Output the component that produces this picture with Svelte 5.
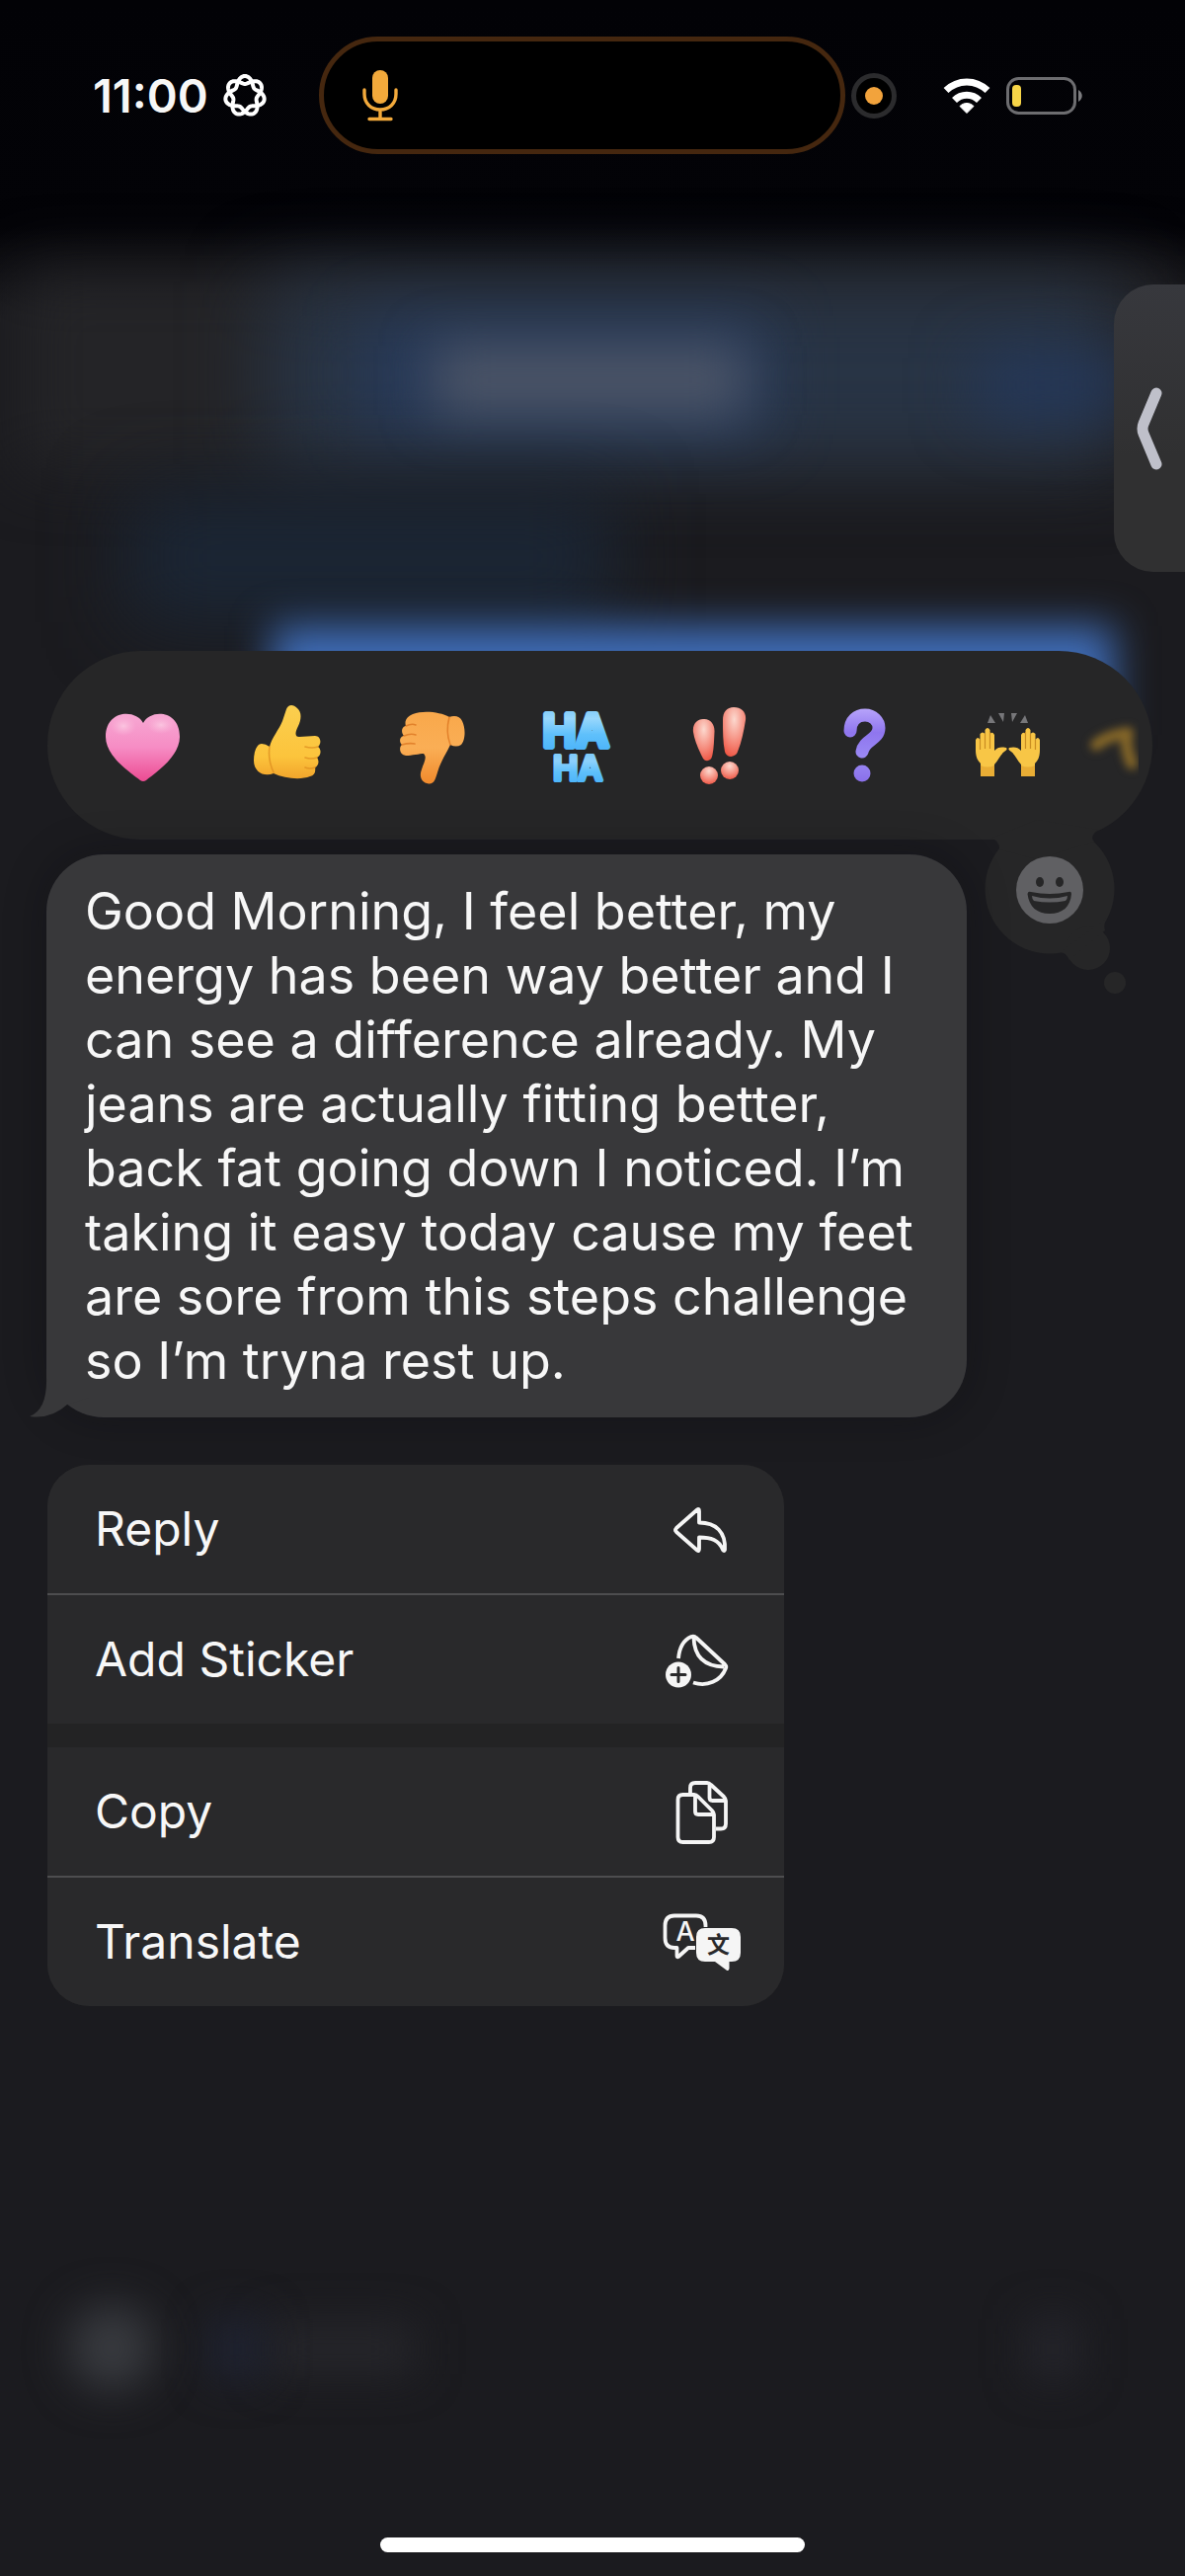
<script>
  const reactions = [
    { id: 'heart', label: 'Heart' },
    { id: 'up', label: 'Thumbs up' },
    { id: 'down', label: 'Thumbs down' },
    { id: 'haha', label: 'Ha ha' },
    { id: 'bang', label: 'Exclamation' },
    { id: 'question', label: 'Question' },
    { id: 'hands', label: 'Raised hands' },
    { id: 'more', label: 'More reactions' },
  ];

  const groups = [
    [
      { id: 'reply', label: 'Reply' },
      { id: 'sticker', label: 'Add Sticker' },
    ],
    [
      { id: 'copy', label: 'Copy' },
      { id: 'translate', label: 'Translate' },
    ],
  ];

  // Seven-petalled ring: one wavy strand that goes round twice and crosses itself.
  const ring = Array.from({ length: 281 }, (_, i) => {
    const t = (i / 280) * Math.PI * 4;
    const r = 16 + 4 * Math.cos(3.5 * t);
    return `${(22 + r * Math.sin(t)).toFixed(2)},${(22 - r * Math.cos(t)).toFixed(2)}`;
  }).join(' ');
</script>

<main class="screen">
  <div class="backdrop" aria-hidden="true">
    <div class="glow band"></div>
    <div class="glow header"></div>
    <div class="glow accent"></div>
    <div class="glow title"></div>
    <div class="glow action"></div>
    <div class="glow subtitle"></div>
    <div class="glow sent"></div>
    <div class="glow plus"></div>
    <div class="glow field"></div>
    <div class="glow cursor"></div>
    <div class="glow mic-hint"></div>
  </div>

  <header class="status">
    <div class="left">
      <time>11:00</time>
      <svg width="44" height="44" viewBox="0 0 44 44" aria-hidden="true">
        <polygon points={ring} fill="none" stroke="#fff" stroke-width="4" stroke-linejoin="round" />
      </svg>
    </div>
    <div class="island">
      <svg width="36" height="52" viewBox="0 0 36 52" aria-hidden="true">
        <rect x="10" y="0" width="16" height="34" rx="8" fill="#f2a93b" />
        <path d="M2 20v4c0 10 7 16 16 16s16-6 16-16v-4M18 40v9M7 49.500h22" fill="none" stroke="#f2a93b" stroke-width="3.400" stroke-linecap="round" />
      </svg>
    </div>
    <div class="right">
      <span class="privacy"><i></i></span>
      <svg width="48" height="36" viewBox="0 0 48 36" aria-hidden="true">
        <path d="M24 35.500l-7-7c4-4 10-4 14 0z" fill="#fff" stroke="#fff" stroke-width="1" stroke-linejoin="round" />
        <path d="M11.500 22.500c7-7 18-7 25 0" fill="none" stroke="#fff" stroke-width="7" />
        <path d="M3 12.500c12-11.500 30-11.500 42 0" fill="none" stroke="#fff" stroke-width="7" />
      </svg>
      <svg width="78" height="38" viewBox="0 0 78 38" aria-hidden="true">
        <rect x="1.500" y="1.500" width="68" height="35" rx="11" fill="none" stroke="#6d6d70" stroke-width="3" />
        <rect x="6" y="8" width="9" height="22" rx="4" fill="#f7d548" />
        <path d="M73 13c5 3 5 9 0 12z" fill="#7b7b7e" />
      </svg>
    </div>
  </header>

  <button class="edge" aria-label="Open side panel">
    <svg width="30" height="84" viewBox="0 0 30 84" aria-hidden="true">
      <path d="M23 6L10 37q-2 5 0 10L23 78" fill="none" stroke="#bfc0ca" stroke-width="11" stroke-linecap="round" stroke-linejoin="round" />
    </svg>
  </button>

  <section class="reactions" aria-label="Reactions">
    <ul>
      {#each reactions as r (r.id)}
        <li>
          <button class="reaction" aria-label={r.label}>
            <svg class={r.id} width="96" height="96" viewBox="0 0 96 96" aria-hidden="true">
              {#if r.id === 'heart'}
                <defs>
                  <linearGradient id="g-heart" x1="0" y1="0" x2="0" y2="1">
                    <stop offset="0" stop-color="#f7a8d3" /><stop offset=".5" stop-color="#f68cc4" /><stop offset="1" stop-color="#ec4b92" />
                  </linearGradient>
                  <radialGradient id="g-shine"><stop offset="0" stop-color="#fbc4e0" /><stop offset="1" stop-color="#f9b5d8" stop-opacity="0" /></radialGradient>
                </defs>
                <path d="M48 25C41 11 10 11 10 39C10 60 38 77 45 83Q48 85 51 83C58 77 85 60 85 39C85 11 55 11 48 25Z" fill="url(#g-heart)" />
                <ellipse cx="28" cy="28" rx="13" ry="10" fill="url(#g-shine)" />
                <ellipse cx="66" cy="27" rx="14" ry="9" fill="url(#g-shine)" />
              {:else if r.id === 'up'}
                <defs>
                  <linearGradient id="g-up" x1="0" y1="0" x2="0" y2="1">
                    <stop offset="0" stop-color="#fbcf4f" /><stop offset=".7" stop-color="#fcc43c" /><stop offset="1" stop-color="#f2a52c" />
                  </linearGradient>
                </defs>
                <path d="M47 11C49 6 54 6 58 10C63 14 62 22 59 28C56 34 55 39 60 39L76 38C82 38 83 46 79 49C83 52 82 58 78 60C81 64 79 69 76 70C77 75 75 78 71 79C61 83 45 81 34 76C25 80 14 75 14 63C14 54 17 46 22 46Q26 46 30 49C32 40 40 31 43 23Z" fill="url(#g-up)" />
                <path d="M66 49Q73 51 79 49M66 60Q72 62 78 60M66 70Q71 72 76 70M30 49Q28 62 34 75" fill="none" stroke="#dc8a1e" stroke-width="1.600" stroke-linecap="round" opacity=".7" />
              {:else if r.id === 'down'}
                <defs>
                  <linearGradient id="g-down" x1="0" y1="0" x2="0" y2="1">
                    <stop offset="0" stop-color="#f9a84b" /><stop offset=".5" stop-color="#faae55" /><stop offset="1" stop-color="#f08a2c" />
                  </linearGradient>
                </defs>
                <path d="M66 19C71 17 77 18 79 23C83 31 82 43 78 47Q73 50 67 47C63 56 57 64 54 75C52 81 51 87 45 86.500C38 86 35 79 38 72C40 65 44 60 40 56C36 56 28 58 22 58C15 57 15 49 18 47C14 43 17 38 20 38C16 33 19 28 22 28C20 22 24 18 29 16C40 12 57 14 66 19Z" fill="url(#g-down)" />
                <path d="M18 47Q25 45 31 46M20 38Q27 35 32 37M22 28Q28 25 32 27M66 19Q62 34 67 47" fill="none" stroke="#d9701c" stroke-width="1.600" stroke-linecap="round" opacity=".7" />
              {:else if r.id === 'haha'}
                <defs>
                  <linearGradient id="g-haha" gradientUnits="userSpaceOnUse" x1="0" y1="10" x2="0" y2="86">
                    <stop offset="0" stop-color="#7fcbfa" /><stop offset=".14" stop-color="#98d7fc" /><stop offset=".35" stop-color="#5fc0fb" /><stop offset=".57" stop-color="#4cb4fa" />
                    <stop offset=".6" stop-color="#7ccafa" /><stop offset=".7" stop-color="#8ed1fc" /><stop offset=".85" stop-color="#5ec0fb" /><stop offset="1" stop-color="#4cb4fa" />
                  </linearGradient>
                </defs>
                <text class="ha" x="48" y="49" font-size="45" text-anchor="middle">HA</text>
                <text class="ha small" x="50" y="83" font-size="34" text-anchor="middle">HA</text>
              {:else if r.id === 'bang'}
                <defs>
                  <radialGradient id="g-bang" cx=".5" cy=".25" r=".8">
                    <stop offset="0" stop-color="#fcd9cf" /><stop offset=".6" stop-color="#f5897a" /><stop offset="1" stop-color="#ee5240" />
                  </radialGradient>
                </defs>
                <g fill="url(#g-bang)">
                  <path d="M31 21C38 20 43 26 42.500 34C42 43 42 52 40 59C39 64 32 65 30 59C25 49 22 41 21 34C20 26 25 21 31 21Z" />
                  <path d="M62 9C70 9 75 14 74 22C72 34 70 44 66 54C64 60 55 61 53 54C51 44 51 34 51 22C51 14 55 9 62 9Z" />
                  <circle cx="37" cy="78" r="9" />
                  <circle cx="58" cy="73" r="9" />
                </g>
              {:else if r.id === 'question'}
                <defs>
                  <linearGradient id="g-q" gradientUnits="userSpaceOnUse" x1="0" y1="8" x2="0" y2="84">
                    <stop offset="0" stop-color="#bba8fb" /><stop offset=".35" stop-color="#8f76ee" /><stop offset=".7" stop-color="#9b8af5" /><stop offset="1" stop-color="#8a70ea" />
                  </linearGradient>
                </defs>
                <path d="M34 33C34 22 41 17 49 17C57 17 63 23 63 30C63 42 48 42 46 54" fill="none" stroke="url(#g-q)" stroke-width="13" stroke-linecap="round" />
                <circle cx="46" cy="76" r="8.500" fill="url(#g-q)" />
              {:else if r.id === 'hands'}
                <defs>
                  <g id="hand">
                    <path d="M20 79V66C16 62 15 58 15 52V42Q17 38 19.500 42V36Q22 33 24.500 36V32Q27 28 29.500 32V36Q32 33 34 37V53C37 49 42 49 46 50Q48 52 44 54C40 57 38 63 34 67V79Z" fill="#f8c646" />
                    <path d="M19.500 42V52M24.500 36V51M29.500 34V51" stroke="#c98d22" stroke-width="1.200" />
                    <path d="M20 68Q27 71 34 68V79H20Z" fill="#e9ad35" />
                  </g>
                </defs>
                <use href="#hand" />
                <use href="#hand" transform="translate(95 0) scale(-1 1)" />
                <path d="M30 17l5 8h-8zM38 15h6l-1 9zM51 15h6l-5 9zM65 17l3 8h-8z" fill="#77777a" />
              {:else}
                <path d="M-9 47Q4 37 23 35Q19 46 27 66" fill="none" stroke="#846628" stroke-width="12" stroke-linecap="round" stroke-linejoin="round" />
              {/if}
            </svg>
          </button>
        </li>
      {/each}
    </ul>
    <button class="emoji" aria-label="Choose an emoji">
      <svg width="160" height="180" viewBox="0 0 160 180" aria-hidden="true">
        <g fill="#262627">
          <circle cx="73" cy="70" r="65.500" />
          <circle cx="112" cy="130" r="22" />
          <circle cx="139" cy="165" r="11" />
          <path d="M13 19Q22 20 22 30L60 40L118 22Q113 17 122 10L60 0z" />
          <path d="M84 134Q90 135 93 142L129 112Q127 106 131 99z" />
        </g>
        <circle cx="73" cy="71" r="34" fill="#606063" />
        <ellipse cx="63" cy="63" rx="4" ry="5" fill="#262627" />
        <ellipse cx="83" cy="63" rx="4" ry="5" fill="#262627" />
        <path d="M50.500 75Q51 72 54 73Q73 77 92 73Q95 72 95 75C94 88 86 95 73 95S52 88 50.500 75Z" fill="#262627" />
        <path d="M55 77Q73 82 91 77Q91 80 89 82Q73 85 57 82Q55 80 55 77Z" fill="#606063" />
      </svg>
    </button>
  </section>

  <article class="bubble">
    <p>Good Morning, I feel better, my energy has been way better and I can see a difference already. My jeans are actually fitting better, back fat going down I noticed. I’m taking it easy today cause my feet are sore from this steps challenge so I’m tryna rest up.</p>
    <svg class="tail" width="60" height="70" viewBox="0 0 60 70" aria-hidden="true">
      <path d="M17 0V30Q18 62 0 69Q22 72 38 57L60 50V0Z" fill="#38383a" />
    </svg>
  </article>

  <nav class="menu" aria-label="Message actions">
    {#each groups as group}
      <div class="group">
        {#each group as item (item.id)}
          <button class="item">
            <span>{item.label}</span>
            <svg width="80" height="70" viewBox="0 0 80 70" aria-hidden="true" fill="none" stroke="#f5f5f5" stroke-width="3.800" stroke-linecap="round" stroke-linejoin="round">
              {#if item.id === 'reply'}
                <path d="M35 15.500Q37 14 37 17V28.500C54 28.500 64 38 63 56Q62.500 58 61 56C57 46 49 43.500 37 43.500V55Q37 58 35 56.500L14 38Q12 36 14 34Z" />
              {:else if item.id === 'sticker'}
                <path d="M16 34C17 23 22 15 29 12Q32 11 34 13L63 40Q65 42 64 44C59 57 45 63 31 58.500M31.500 13C32 32 42 42 62 42.500" stroke-linecap="butt" />
                <circle cx="16" cy="50.500" r="13" fill="#f5f5f5" stroke="none" />
                <path d="M16 43.500v14M9 50.500h14" stroke="#29292b" stroke-width="3" />
              {:else if item.id === 'copy'}
                <path d="M20.500 18H32Q34 18 36 20L50 34Q52 36 52 38V61Q52 66 47 66H20.500Q15.500 66 15.500 61V23Q15.500 18 20.500 18ZM33 19V35Q33 38 36 38H51" />
                <path d="M28 17V11Q28 6 33 6H45Q47 6 49 8L62 20Q64 22 64 24V47.500Q64 52.500 59 52.500H54M47.500 7V21Q47.500 24 50.500 24H63" stroke-linecap="butt" />
              {:else}
                <path d="M33 41H26L16 50Q14.500 51 14.500 49V41H12Q2.500 41 2.500 31V18.500Q2.500 8.500 12 8.500H34Q43.500 8.500 43.500 18.500V20" stroke-linecap="butt" />
                <path d="M43 21H70Q79 21 79 30V46Q79 55 70 55H67.500V62Q67 65 64.500 63.500L53 55H43Q34 55 34 46V30Q34 21 43 21Z" fill="#f5f5f5" stroke="none" />
                <text class="latin" x="23" y="34" font-size="27" text-anchor="middle">A</text>
                <text class="han" x="56.500" y="46" font-size="23" text-anchor="middle">文</text>
              {/if}
            </svg>
          </button>
        {/each}
      </div>
    {/each}
  </nav>

  <div class="home"></div>
</main>

<style>
  :global(body) {
    margin: 0;
    background: #1b1b1f;
  }
  .screen {
    position: relative;
    display: flex;
    flex-direction: column;
    min-height: 100vh;
    box-sizing: border-box;
    padding: 37px 0 24px;
    overflow: hidden;
    color: #f7f7f7;
    font-family: Inter, 'Liberation Sans', sans-serif;
    background: linear-gradient(180deg, #020206 0, #030307 230px, #1b1b1f 320px);
  }
  button {
    margin: 0;
    padding: 0;
    border: 0;
    background: none;
    color: inherit;
    font: inherit;
    cursor: pointer;
  }
  svg {
    display: block;
    flex: none;
  }

  .backdrop {
    position: absolute;
    inset: 0;
  }
  .glow {
    position: absolute;
    filter: blur(32px);
  }
  .band { left: 20px; right: 10px; top: 272px; height: 205px; background: #242427; }
  .header { left: 270px; right: 70px; top: 285px; height: 185px; background: #283445; filter: blur(40px); }
  .accent { left: 370px; right: 420px; top: 320px; height: 120px; background: #283d62; opacity: .7; }
  .title { left: 440px; right: 445px; top: 350px; height: 70px; background: #4c5567; filter: blur(26px); }
  .action { left: 990px; right: 60px; top: 360px; height: 60px; background: #24385c; }
  .subtitle { left: 130px; right: 580px; top: 500px; height: 130px; background: #1b2635; filter: blur(40px); }
  .sent { left: 276px; right: 72px; top: 634px; height: 110px; background: #3f6db8; filter: blur(20px); }
  .plus { left: 70px; width: 86px; bottom: 188px; height: 86px; border-radius: 50%; background: #393b40; filter: blur(22px); }
  .field { left: 270px; width: 150px; bottom: 205px; height: 50px; background: #26262b; filter: blur(22px); }
  .cursor { left: 215px; width: 50px; bottom: 200px; height: 60px; background: #202434; filter: blur(22px); }
  .mic-hint { right: 110px; width: 48px; bottom: 200px; height: 60px; background: #26262d; filter: blur(22px); }

  .status {
    position: relative;
    display: grid;
    grid-template-columns: 1fr 533px 1fr;
    align-items: center;
    padding-right: 21px;
  }
  .left {
    display: flex;
    align-items: center;
    gap: 15px;
    padding-left: 94px;
  }
  time {
    font-size: 47px;
    line-height: 56px;
    font-weight: 600;
  }
  .island {
    display: flex;
    align-items: center;
    box-sizing: border-box;
    height: 119px;
    padding-left: 39px;
    border: 5px solid #45270f;
    border-radius: 60px;
    background: #000;
  }
  .right {
    display: flex;
    align-items: center;
    gap: 16px;
    padding: 0 82px 0 6px;
  }
  .privacy {
    display: grid;
    place-items: center;
    box-sizing: border-box;
    width: 46px;
    height: 46px;
    margin-right: auto;
    border: 5px solid #2b2b2d;
    border-radius: 50%;
    background: #000;
  }
  .privacy i {
    width: 18px;
    height: 18px;
    border-radius: 50%;
    background: #f2a33c;
  }

  .edge {
    position: absolute;
    right: 0;
    top: 288px;
    display: flex;
    align-items: center;
    width: 72px;
    height: 291px;
    padding-left: 20px;
    border-radius: 40px 0 0 40px;
    background: linear-gradient(180deg, #37383d, #303031 60%);
  }

  .reactions {
    position: relative;
    margin: 503px 33px 0 48px;
    border-radius: 95px;
    background: #262627;
  }
  ul {
    display: flex;
    height: 191px;
    margin: 0 14px 0 0;
    padding: 0 0 0 24px;
    overflow: hidden;
    list-style: none;
  }
  li {
    flex: 0 0 146px;
    display: flex;
  }
  .reaction {
    display: grid;
    place-items: center;
    width: 100%;
  }
  .reaction svg {
    overflow: visible;
  }
  .more {
    filter: blur(4px);
  }
  .ha {
    font-family: Inter, sans-serif;
    font-weight: 600;
    fill: url(#g-haha);
    stroke: url(#g-haha);
    stroke-width: 6px;
    stroke-linejoin: round;
  }
  .small {
    stroke-width: 4px;
  }
  .emoji {
    position: absolute;
    right: 17px;
    top: 171px;
  }

  .bubble {
    position: relative;
    box-sizing: border-box;
    max-width: 932px;
    margin: 15px 48px 0 47px;
    padding: 25px 39px;
    border-radius: 58px;
    background: #38383a;
    box-shadow: 0 0 40px rgba(10, 10, 14, .35);
  }
  p {
    position: relative;
    z-index: 1;
    margin: 0;
    font-size: 52px;
    line-height: 65px;
  }
  .tail {
    position: absolute;
    left: -17px;
    bottom: 0;
  }

  .menu {
    position: relative;
    display: flex;
    flex-direction: column;
    gap: 24px;
    max-width: 746px;
    margin: 48px 48px 0;
    border-radius: 42px;
    overflow: hidden;
    background: #232324;
  }
  .group {
    display: flex;
    flex-direction: column;
    background: #29292b;
  }
  .item {
    display: flex;
    align-items: center;
    justify-content: space-between;
    height: 130px;
    padding: 0 43px 0 48px;
    font-size: 48px;
    line-height: 60px;
    text-align: left;
  }
  .item + .item {
    height: 132px;
    border-top: 2px solid #4d4d4f;
  }
  .latin {
    font-family: Inter, sans-serif;
    font-weight: 500;
    fill: #f5f5f5;
    stroke: none;
  }
  .han {
    font-family: 'Noto Sans CJK SC', sans-serif;
    font-weight: 700;
    fill: #29292b;
    stroke: none;
  }

  .home {
    position: relative;
    width: 430px;
    height: 15px;
    margin: auto auto 0;
    border-radius: 8px;
    background: #fff;
  }
</style>
